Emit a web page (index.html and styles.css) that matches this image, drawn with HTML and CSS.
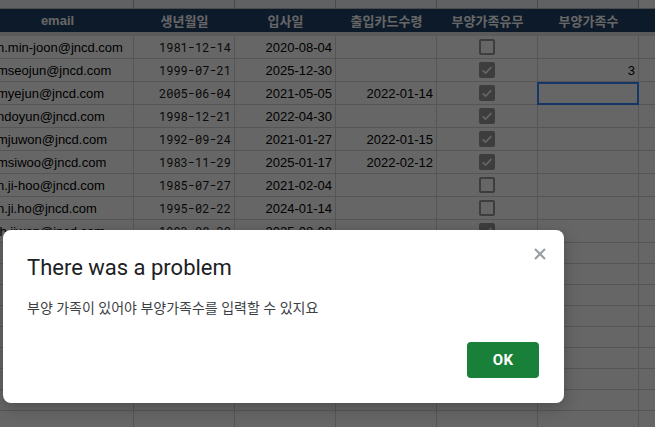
FILE: index.html
```html
<!DOCTYPE html>
<html lang="ko">
<head>
<meta charset="utf-8">
<title>Sheet</title>
<link rel="stylesheet" href="styles.css">
</head>
<body>
<div class="sheet">
  <div class="row colhead">
    <div class="c"></div><div class="c"></div><div class="c"></div><div class="c"></div><div class="c"></div><div class="c"></div><div class="c sel"></div><div class="c"></div>
  </div>
  <div class="row hdr">
    <div class="c">email</div><div class="c">생년월일</div><div class="c">입사일</div><div class="c">출입카드수령</div><div class="c">부양가족유무</div><div class="c">부양가족수</div><div class="c"></div><div class="c"></div>
  </div>
  <div class="freeze"></div>

  <div class="row data">
    <div class="c em">n.min-joon@jncd.com</div><div class="c mono">1981-12-14</div><div class="c num">2020-08-04</div><div class="c num"></div><div class="c cb"><span class="box"></span></div><div class="c num"></div><div class="c"></div><div class="c"></div>
  </div>
  <div class="row data">
    <div class="c em">mseojun@jncd.com</div><div class="c mono">1999-07-21</div><div class="c num">2025-12-30</div><div class="c num"></div><div class="c cb"><span class="box on"><svg viewBox="0 0 16 16"><path d="M3.6 8.3 6.6 11.1 12.4 5.1"/></svg></span></div><div class="c num">3</div><div class="c"></div><div class="c"></div>
  </div>
  <div class="row data">
    <div class="c em">myejun@jncd.com</div><div class="c mono">2005-06-04</div><div class="c num">2021-05-05</div><div class="c num">2022-01-14</div><div class="c cb"><span class="box on"><svg viewBox="0 0 16 16"><path d="M3.6 8.3 6.6 11.1 12.4 5.1"/></svg></span></div><div class="c num active"></div><div class="c"></div><div class="c"></div>
  </div>
  <div class="row data">
    <div class="c em">ndoyun@jncd.com</div><div class="c mono">1998-12-21</div><div class="c num">2022-04-30</div><div class="c num"></div><div class="c cb"><span class="box on"><svg viewBox="0 0 16 16"><path d="M3.6 8.3 6.6 11.1 12.4 5.1"/></svg></span></div><div class="c num"></div><div class="c"></div><div class="c"></div>
  </div>
  <div class="row data">
    <div class="c em">mjuwon@jncd.com</div><div class="c mono">1992-09-24</div><div class="c num">2021-01-27</div><div class="c num">2022-01-15</div><div class="c cb"><span class="box on"><svg viewBox="0 0 16 16"><path d="M3.6 8.3 6.6 11.1 12.4 5.1"/></svg></span></div><div class="c num"></div><div class="c"></div><div class="c"></div>
  </div>
  <div class="row data">
    <div class="c em">msiwoo@jncd.com</div><div class="c mono">1983-11-29</div><div class="c num">2025-01-17</div><div class="c num">2022-02-12</div><div class="c cb"><span class="box on"><svg viewBox="0 0 16 16"><path d="M3.6 8.3 6.6 11.1 12.4 5.1"/></svg></span></div><div class="c num"></div><div class="c"></div><div class="c"></div>
  </div>
  <div class="row data">
    <div class="c em">n.ji-hoo@jncd.com</div><div class="c mono">1985-07-27</div><div class="c num">2021-02-04</div><div class="c num"></div><div class="c cb"><span class="box"></span></div><div class="c num"></div><div class="c"></div><div class="c"></div>
  </div>
  <div class="row data">
    <div class="c em">n.ji.ho@jncd.com</div><div class="c mono">1995-02-22</div><div class="c num">2024-01-14</div><div class="c num"></div><div class="c cb"><span class="box"></span></div><div class="c num"></div><div class="c"></div><div class="c"></div>
  </div>
  <div class="row data">
    <div class="c em">'h.jiwon@jncd.com</div><div class="c mono">1993-08-30</div><div class="c num">2025-08-08</div><div class="c num"></div><div class="c cb"><span class="box on"><svg viewBox="0 0 16 16"><path d="M3.6 8.3 6.6 11.1 12.4 5.1"/></svg></span></div><div class="c num"></div><div class="c"></div><div class="c"></div>
  </div>

  <div class="row empty"><div class="c"></div><div class="c"></div><div class="c"></div><div class="c"></div><div class="c"></div><div class="c"></div><div class="c"></div><div class="c"></div></div>
  <div class="row empty"><div class="c"></div><div class="c"></div><div class="c"></div><div class="c"></div><div class="c"></div><div class="c"></div><div class="c"></div><div class="c"></div></div>
  <div class="row empty"><div class="c"></div><div class="c"></div><div class="c"></div><div class="c"></div><div class="c"></div><div class="c"></div><div class="c"></div><div class="c"></div></div>
  <div class="row empty"><div class="c"></div><div class="c"></div><div class="c"></div><div class="c"></div><div class="c"></div><div class="c"></div><div class="c"></div><div class="c"></div></div>
  <div class="row empty"><div class="c"></div><div class="c"></div><div class="c"></div><div class="c"></div><div class="c"></div><div class="c"></div><div class="c"></div><div class="c"></div></div>
  <div class="row empty"><div class="c"></div><div class="c"></div><div class="c"></div><div class="c"></div><div class="c"></div><div class="c"></div><div class="c"></div><div class="c"></div></div>
  <div class="row empty"><div class="c"></div><div class="c"></div><div class="c"></div><div class="c"></div><div class="c"></div><div class="c"></div><div class="c"></div><div class="c"></div></div>
  <div class="row empty"><div class="c"></div><div class="c"></div><div class="c"></div><div class="c"></div><div class="c"></div><div class="c"></div><div class="c"></div><div class="c"></div></div>
  <div class="row empty"><div class="c"></div><div class="c"></div><div class="c"></div><div class="c"></div><div class="c"></div><div class="c"></div><div class="c"></div><div class="c"></div></div>
</div>

<div class="overlay"></div>

<div class="dialog" role="alertdialog">
  <button class="close" aria-label="Close">
    <svg viewBox="0 0 12 12"><path d="M1 1 11 11M11 1 1 11"/></svg>
  </button>
  <h2 class="title">There was a problem</h2>
  <p class="msg">부양 가족이 있어야 부양가족수를 입력할 수 있지요</p>
  <div class="actions"><button class="ok">OK</button></div>
</div>
</body>
</html>
```

FILE: styles.css
```css
html, body {
  margin: 0;
  padding: 0;
  width: 655px;
  height: 427px;
  overflow: hidden;
  background: #ffffff;
}

.sheet {
  margin-left: -19px;
  font-family: "Liberation Sans", Arial, "Noto Sans CJK KR", sans-serif;
  font-size: 13px;
  color: #000;
}

.row {
  display: grid;
  grid-template-columns: 153px 101px 101px 101px 101px 101px 101px 80px;
}

.c {
  box-sizing: border-box;
  border-right: 1px solid #d6d6d6;
  border-bottom: 1px solid #d6d6d6;
  display: flex;
  align-items: center;
  padding: 0 3px;
  white-space: nowrap;
  overflow: hidden;
  position: relative;
}

.colhead .c {
  height: 9px;
  background: #f1f3f4;
  border-right-color: #b8b8b8;
  border-bottom-color: #bcbcbc;
}
.colhead .c.sel { background: #ffffff; }

.hdr .c {
  height: 23px;
  background: #1f4168;
  border: none;
  justify-content: center;
  color: #ffffff;
  font-weight: 700;
  font-family: "Liberation Sans", Arial, "Noto Sans CJK KR", sans-serif;
}

.freeze {
  height: 4px;
  background: #e3e3e3;
}

.data .c { height: 23px; }
.empty .c { height: 21px; }

.em { padding-left: 16px; }

.mono {
  justify-content: flex-end;
  font-family: "Roboto Mono", "DejaVu Sans Mono", monospace;
  font-size: 12px;
  color: #1a1a1a;
}

.num { justify-content: flex-end; }

.cb { justify-content: center; }

.box {
  box-sizing: border-box;
  width: 16px;
  height: 16px;
  border: 2px solid #999999;
  border-radius: 2px;
  background: #ffffff;
  display: block;
  position: relative;
}
.box.on {
  border: none;
  background: #9a9a9a;
}
.box svg {
  width: 16px;
  height: 16px;
  display: block;
}
.box path {
  fill: none;
  stroke: #ffffff;
  stroke-width: 1.6;
}

.c.active {
  overflow: visible;
  z-index: 1;
}
.active::after {
  content: "";
  position: absolute;
  left: -1px;
  top: 0;
  right: -1px;
  bottom: -1px;
  border: 2px solid #3588ff;
}

.overlay {
  position: absolute;
  inset: 0;
  z-index: 2;
  background: rgba(0, 0, 0, 0.6);
}

.dialog {
  position: absolute;
  z-index: 3;
  left: 3px;
  top: 230px;
  width: 561px;
  box-sizing: border-box;
  padding: 24px 25px 25px 24px;
  background: #ffffff;
  border-radius: 8px;
  box-shadow: 0 4px 16px rgba(0, 0, 0, 0.25);
  font-family: Roboto, "Noto Sans CJK KR", sans-serif;
}

.close {
  position: absolute;
  top: 18px;
  right: 18px;
  width: 12px;
  height: 12px;
  padding: 0;
  border: none;
  background: none;
}
.close svg {
  display: block;
  width: 12px;
  height: 12px;
}
.close path {
  stroke: #9aa0a6;
  stroke-width: 2.2;
  fill: none;
}

.title {
  margin: 0;
  font-size: 22px;
  line-height: 28px;
  font-weight: 400;
  color: #202124;
}

.msg {
  margin: 16px 0 0;
  font-size: 14px;
  line-height: 20px;
  color: #3c4043;
}

.actions {
  margin-top: 24px;
  display: flex;
  justify-content: flex-end;
}

.ok {
  width: 72px;
  height: 36px;
  border: none;
  border-radius: 4px;
  background: #188038;
  color: #ffffff;
  font-family: Roboto, "Liberation Sans", sans-serif;
  font-size: 15px;
  font-weight: 700;
  letter-spacing: 0.3px;
  padding: 0;
}
```
